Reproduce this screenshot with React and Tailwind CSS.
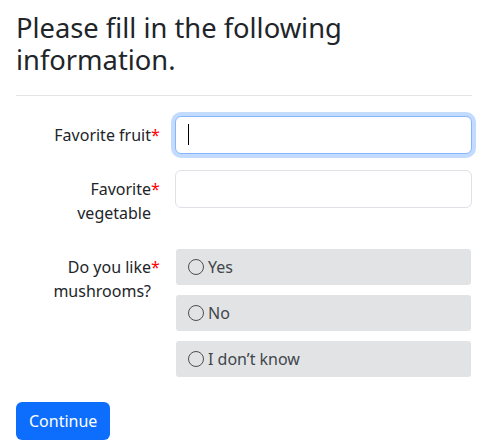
const font = { fontFamily: '"Noto Sans", "Liberation Sans", sans-serif' }

const options = ['Yes', 'No', 'I don\u2019t know']

function Label({ children }) {
  return (
    <div className="relative w-[135px] shrink-0 pt-[7px] pb-[7px] text-right leading-6 text-[#212529]">
      {children}
      <span className="absolute left-full top-[7px] text-[#ff0000]">*</span>
    </div>
  )
}

export default function App() {
  return (
    <div className="px-4 pb-4 text-base bg-white" style={font}>
      <h2 className="mt-3 text-[27.3px] leading-8 font-normal text-[#212529]">
        Please fill in the following information.
      </h2>
      <hr className="mt-[19px] border-t border-[#e5e5e5]" />

      <form className="mt-5">
        {/* Favorite fruit */}
        <div className="flex gap-6 mb-4">
          <Label>Favorite fruit</Label>
          <div className="relative flex-1">
            <input
              type="text"
              className="w-full h-[38px] px-3 rounded-[6px] border border-[#86b7fe] bg-white outline-none shadow-[0_0_0_4px_rgba(13,110,253,0.25)]"
            />
            <span className="absolute left-[13px] top-2 w-px h-[21px] bg-black" />
          </div>
        </div>

        {/* Favorite vegetable */}
        <div className="flex gap-6 mb-4">
          <Label>Favorite vegetable</Label>
          <div className="flex-1">
            <input
              type="text"
              className="w-full h-[38px] px-3 rounded-[6px] border border-[#dee2e6] bg-white outline-none"
            />
          </div>
        </div>

        {/* Mushrooms */}
        <div className="flex gap-6 mb-[25px]">
          <Label>Do you like mushrooms?</Label>
          <div className="flex-1 pt-px px-px flex flex-col gap-[10px]">
            {options.map(opt => (
              <label
                key={opt}
                className="flex items-center h-9 px-3 rounded-[3px] bg-[#e2e3e5] text-[#41464b] cursor-pointer"
              >
                <span className="w-4 h-4 rounded-full border-[1.5px] border-[#4a4f55] bg-transparent mr-1" />
                {opt}
              </label>
            ))}
          </div>
        </div>

        <button
          type="button"
          className="h-[38px] px-[13px] rounded-[6px] bg-[#0d6efd] text-white leading-6"
        >
          Continue
        </button>
      </form>
    </div>
  )
}
